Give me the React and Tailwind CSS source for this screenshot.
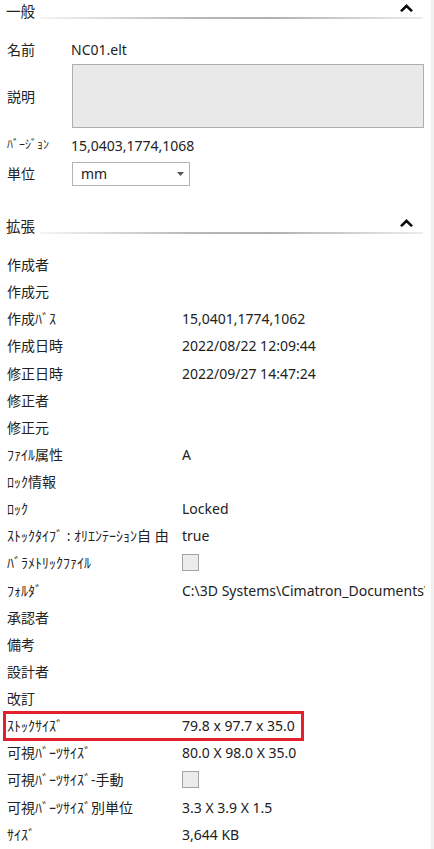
import React from "react";

const FONT = { fontFamily: '"Noto Sans", "Noto Sans CJK JP", sans-serif' };

function Chevron() {
  return (
    <svg width="13" height="8" viewBox="0 0 13 8" className="block">
      <polygon points="6.5,0 13,6.5 11,8 6.5,3.8 2,8 0,6.5" fill="#0a0a0a" />
    </svg>
  );
}

function SectionHeader({ title }) {
  return (
    <div className="relative h-[26px] flex items-start">
      <div className="pl-[6px] pt-[1px] text-[14.5px] leading-[20px] text-[#222]">{title}</div>
      <div
        className="absolute left-[40px] right-[8px] top-[17px] h-[2px]"
        style={{ background: "linear-gradient(to right, #f4f4f4, #b8b8b8 40%, #b0b0b0 60%, #ececec)" }}
      />
      <div className="absolute left-[400px] top-[4px]">
        <Chevron />
      </div>
    </div>
  );
}

function Checkbox() {
  return <div className="w-[17px] h-[17px] border border-[#a3a3a3] bg-[#ececec]" />;
}

function Row({ label, value, boxed }) {
  return (
    <div className="relative h-[27.14px] flex items-center">
      <div className="w-[182px] pl-[7px] whitespace-nowrap text-[14px] text-[#222]">{label}</div>
      <div className="w-[243px] whitespace-nowrap overflow-hidden text-[14px] text-[#222]">{value}</div>
      {boxed && (
        <div className="absolute left-[3px] top-[-1px] w-[301px] h-[30px] border-[3px] border-[#e3202b]" />
      )}
    </div>
  );
}

export default function App() {
  const rows = [
    ["作成者", ""],
    ["作成元", ""],
    ["作成ﾊﾞｽ", "15,0401,1774,1062"],
    ["作成日時", "2022/08/22 12:09:44"],
    ["修正日時", "2022/09/27 14:47:24"],
    ["修正者", ""],
    ["修正元", ""],
    ["ﾌｧｲﾙ属性", "A"],
    ["ﾛｯｸ情報", ""],
    ["ﾛｯｸ", "Locked"],
    ["ｽﾄｯｸﾀｲﾌﾞ : ｵﾘｴﾝﾃｰｼｮﾝ自 由", "true"],
    ["ﾊﾞﾗﾒﾄﾘｯｸﾌｧｲﾙ", <Checkbox />],
    ["ﾌｫﾙﾀﾞ", "C:\\3D Systems\\Cimatron_Documents\\"],
    ["承認者", ""],
    ["備考", ""],
    ["設計者", ""],
    ["改訂", ""],
    ["ｽﾄｯｸｻｲｽﾞ", "79.8 x 97.7 x 35.0", true],
    ["可視ﾊﾞｰﾂｻｲｽﾞ", "80.0 X 98.0 X 35.0"],
    ["可視ﾊﾞｰﾂｻｲｽﾞ-手動", <Checkbox />],
    ["可視ﾊﾞｰﾂｻｲｽﾞ別単位", "3.3 X 3.9 X 1.5"],
    ["ｻｲｽﾞ", "3,644 KB"],
  ];
  return (
    <div className="w-[434px] h-[849px] overflow-hidden bg-white flex" style={FONT}>
      <div className="flex-1 flex flex-col">
        <SectionHeader title="一般" />
        <div className="h-[9px]" />
        <div className="h-[27px] flex items-center pt-[1px]">
          <div className="w-[71px] pl-[7px] text-[14px] text-[#222]">名前</div>
          <div className="text-[14px] text-[#222]">NC01.elt</div>
        </div>
        <div className="h-[2px]" />
        <div className="h-[64px] flex items-center">
          <div className="w-[72px] pl-[7px] text-[14px] text-[#222]">説明</div>
          <div className="w-[352px] h-[64px] border border-[#adadad] bg-[#e9e9e9]" />
        </div>
        <div className="h-[3px]" />
        <div className="h-[28px] flex items-center">
          <div className="w-[71px] pl-[7px] text-[12px] text-[#222] whitespace-nowrap">ﾊﾞｰｼﾞｮﾝ</div>
          <div className="text-[14px] text-[#222]">15,0403,1774,1068</div>
        </div>
        <div className="h-[29px] flex items-center">
          <div className="w-[72px] pl-[7px] text-[14px] text-[#222]">単位</div>
          <div className="w-[118px] h-[24px] border border-[#b4b4b4] bg-white flex items-center justify-between pl-[8px] pr-[5px]">
            <span className="text-[14px] text-[#222]">mm</span>
            <svg width="7" height="4" viewBox="0 0 7 4">
              <polygon points="0,0 7,0 3.5,4" fill="#555" />
            </svg>
          </div>
        </div>
        <div className="h-[27px]" />
        <SectionHeader title="拡張" />
        <div className="h-[10px]" />
        {rows.map(([l, v, b], i) => (
          <Row key={i} label={l} value={v} boxed={b} />
        ))}
      </div>
      <div className="w-[3px] bg-[#f0f0f0]" />
    </div>
  );
}
